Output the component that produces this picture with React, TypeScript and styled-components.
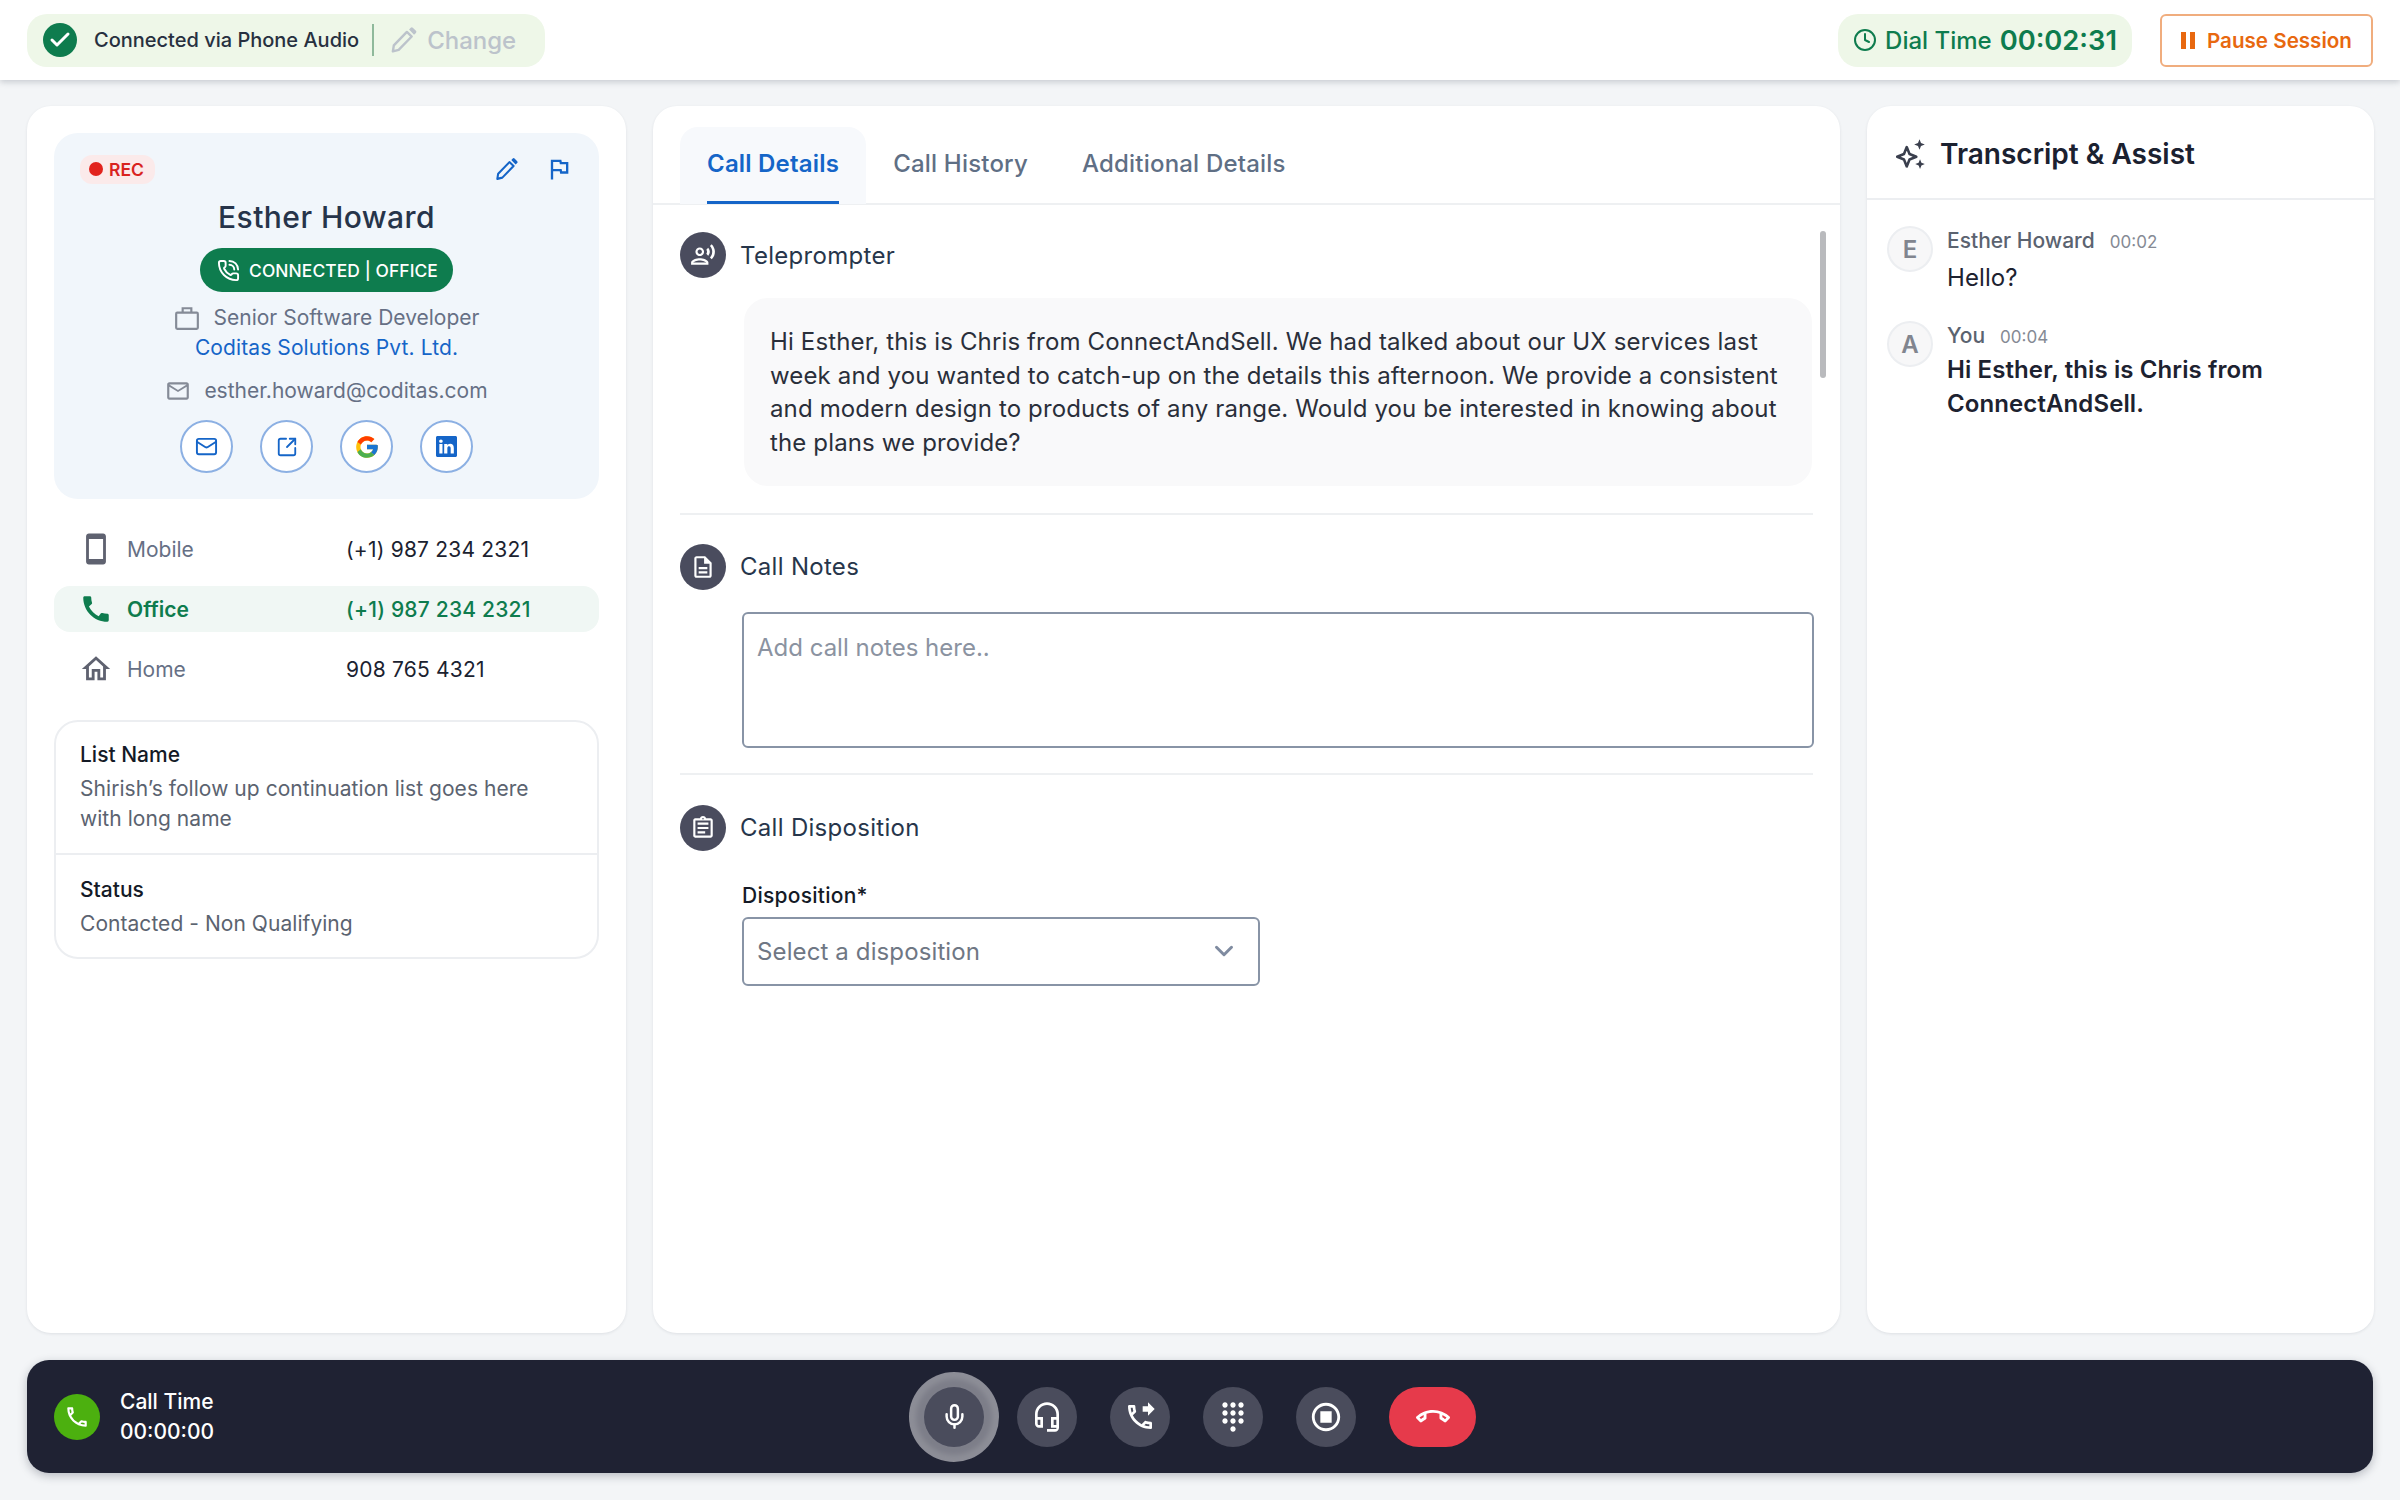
import * as React from "react";
import styled, { createGlobalStyle } from "styled-components";
import { Check, ChevronDown, Clock, Mail, Mic, PhoneCall, SquareArrowOutUpRight } from "lucide-react";
import { FcGoogle } from "react-icons/fc";
import { BsLinkedin } from "react-icons/bs";
import {
  MdCall,
  MdDialpad,
  MdOutlineAssignment,
  MdOutlineCall,
  MdOutlineCallEnd,
  MdOutlineDescription,
  MdOutlineFlag,
  MdOutlineHeadsetMic,
  MdOutlineHome,
  MdOutlineMail,
  MdOutlinePhoneForwarded,
  MdOutlineRecordVoiceOver,
  MdOutlineSmartphone,
  MdOutlineStopCircle,
} from "react-icons/md";

const GlobalStyle = createGlobalStyle`
  * { box-sizing: border-box; }
  html, body { margin: 0; padding: 0; }
  body {
    font-family: Inter, "Noto Sans", sans-serif;
    background: #f3f5f7;
    color: #2a3547;
  }
`;

const Page = styled.div`
  width: 2400px;
  height: 1500px;
  display: flex;
  flex-direction: column;
  background: #f3f5f7;
`;

const TopBar = styled.header`
  height: 80px;
  flex: none;
  display: flex;
  align-items: center;
  justify-content: space-between;
  padding: 0 27px;
  background: #fff;
  box-shadow: 0 2px 6px rgba(40, 50, 70, 0.22);
`;

const StatusPill = styled.div`
  height: 53px;
  display: flex;
  align-items: center;
  padding: 0 29px 0 16px;
  border-radius: 20px;
  background: #eef7e8;
`;

const CheckBadge = styled.span`
  width: 34px;
  height: 34px;
  border-radius: 50%;
  display: flex;
  align-items: center;
  justify-content: center;
  color: #fff;
  background: #0e7c4e;
`;

const StatusText = styled.span`
  margin-left: 17px;
  font-size: 20px;
  font-weight: 500;
  color: #27303f;
`;

const PillDivider = styled.span`
  width: 2px;
  height: 32px;
  margin: 0 15px 0 13px;
  background: #8fb99b;
`;

const ChangeLink = styled.span`
  display: flex;
  align-items: center;
  gap: 9px;
  font-size: 24px;
  font-weight: 500;
  color: #bcc3cb;
`;

const TopRight = styled.div`
  display: flex;
  align-items: center;
  gap: 28px;
`;

const DialPill = styled.div`
  height: 53px;
  display: flex;
  align-items: center;
  padding: 0 15px;
  border-radius: 20px;
  background: #eef7e8;
  color: #0e7c4e;
  font-size: 24px;
  font-weight: 500;
`;

const DialTime = styled.span`
  margin-left: 8px;
  font-size: 27.3px;
  font-weight: 600;
`;

const PauseButton = styled.button`
  width: 213px;
  height: 53px;
  display: flex;
  align-items: center;
  justify-content: center;
  gap: 12px;
  padding: 0;
  font: 600 20.6px Inter, sans-serif;
  color: #e8680f;
  background: #fff;
  border: 2px solid #f0ad7e;
  border-radius: 6px;
`;

const PauseBars = styled.span`
  width: 14px;
  height: 17px;
  border-left: 5px solid #e8680f;
  border-right: 5px solid #e8680f;
`;

const Columns = styled.main`
  flex: 1;
  min-height: 0;
  display: grid;
  grid-template-columns: 599px 1187px 507px;
  gap: 27px;
  padding: 26px 27px 27px;
`;

const Panel = styled.section`
  position: relative;
  min-height: 0;
  background: #fff;
  border-radius: 24px;
  box-shadow: 0 1px 3px rgba(40, 50, 70, 0.1);
  overflow: hidden;
`;

const ContactPanel = styled(Panel)`
  padding: 27px;
`;

const ContactCard = styled.div`
  padding: 21px 26px 26px;
  border-radius: 24px;
  background: #f1f6fb;
  display: flex;
  flex-direction: column;
  align-items: center;
`;

const CardTop = styled.div`
  width: 100%;
  height: 30px;
  display: flex;
  align-items: center;
  justify-content: space-between;
`;

const RecChip = styled.span`
  height: 29px;
  display: flex;
  align-items: center;
  gap: 6px;
  padding: 0 11px 0 9px;
  border-radius: 12px;
  background: #fbeaea;
  color: #d9231f;
  font-size: 17.5px;
  font-weight: 600;
`;

const RecDot = styled.span`
  width: 14px;
  height: 14px;
  border-radius: 50%;
  background: #e2231d;
`;

const CardActions = styled.div`
  display: flex;
  align-items: center;
  gap: 26px;
  color: #1565c8;
`;

const ContactName = styled.h2`
  margin: 13px 0 0;
  font-size: 30px;
  line-height: 40px;
  font-weight: 500;
  letter-spacing: 0.45px;
  color: #26344a;
`;

const ConnectedPill = styled.div`
  height: 44px;
  margin-top: 11px;
  display: flex;
  align-items: center;
  gap: 9px;
  padding: 0 15px 0 17px;
  border-radius: 22px;
  background: #0e7c4e;
  color: #fff;
  font-size: 17.4px;
  font-weight: 500;
  letter-spacing: 0.1px;
`;

const InfoLine = styled.div<{ $gap?: number; $top?: number }>`
  display: flex;
  align-items: center;
  gap: ${({ $gap }) => $gap ?? 14}px;
  margin-top: ${({ $top }) => $top ?? 0}px;
  font-size: 21px;
  line-height: 30px;
  color: #667085;
`;

const CompanyLink = styled.a`
  font-size: 21px;
  line-height: 30px;
  letter-spacing: 0.1px;
  color: #1565c8;
`;

const LinkRow = styled.div`
  display: flex;
  gap: 27px;
  margin-top: 14px;
`;

const RoundLink = styled.span`
  width: 53px;
  height: 53px;
  display: flex;
  align-items: center;
  justify-content: center;
  border: 2px solid #8cb0e3;
  border-radius: 50%;
  background: #fff;
  color: #1565c8;
`;

const PhoneList = styled.div`
  margin-top: 27px;
  display: flex;
  flex-direction: column;
  gap: 14px;
`;

const PhoneRow = styled.div<{ $active?: boolean }>`
  height: 46px;
  display: grid;
  grid-template-columns: 48px 219px 1fr;
  align-items: center;
  padding-left: 25px;
  border-radius: 16px;
  font-size: 21px;
  background: ${({ $active }) => ($active ? "#f0f7f4" : "transparent")};
  color: ${({ $active }) => ($active ? "#0e7c4e" : "#667085")};
  font-weight: ${({ $active }) => ($active ? 600 : 400)};
`;

const PhoneNumber = styled.span<{ $active?: boolean }>`
  letter-spacing: 0.2px;
  color: ${({ $active }) => ($active ? "#0e7c4e" : "#1b2230")};
  font-weight: ${({ $active }) => ($active ? 500 : 400)};
`;

const ListCard = styled.div`
  margin-top: 28px;
  border: 2px solid #eceef1;
  border-radius: 24px;
`;

const ListBlock = styled.div`
  padding: 18px 24px 19px;
  & + & {
    padding: 20px 24px 18px;
    border-top: 2px solid #eceef1;
  }
`;

const ListLabel = styled.div`
  font-size: 21px;
  line-height: 30px;
  font-weight: 500;
  color: #141a26;
`;

const ListValue = styled.div`
  margin-top: 4px;
  font-size: 21px;
  line-height: 30px;
  letter-spacing: 0.05px;
  color: #5b6370;
`;

const Tabs = styled.nav`
  height: 99px;
  display: flex;
  align-items: flex-end;
  padding-left: 27px;
  border-bottom: 2px solid #eef0f2;
`;

const Tab = styled.div<{ $active?: boolean }>`
  position: relative;
  height: 77px;
  margin-bottom: -1px;
  display: flex;
  align-items: center;
  padding: 0 27px 5px;
  border-radius: 18px 18px 0 0;
  font-size: 24px;
  letter-spacing: 0.2px;
  font-weight: ${({ $active }) => ($active ? 600 : 500)};
  color: ${({ $active }) => ($active ? "#1565c8" : "#5f6f85")};
  background: ${({ $active }) => ($active ? "#f7f9fc" : "transparent")};
  ${({ $active }) =>
    $active &&
    `&::after {
      content: "";
      position: absolute;
      left: 27px;
      right: 27px;
      bottom: 0;
      height: 3px;
      background: #1565c8;
    }`}
`;

const ScrollThumb = styled.div`
  position: absolute;
  top: 125px;
  right: 14px;
  width: 6px;
  height: 147px;
  border-radius: 3px;
  background: #b9babd;
`;

const DetailsBody = styled.div`
  padding: 0 27px;
`;

const Section = styled.div<{ $top: number; $bottom: number; $last?: boolean }>`
  padding: ${({ $top }) => $top}px 0 ${({ $bottom }) => $bottom}px;
  border-bottom: ${({ $last }) => ($last ? "none" : "2px solid #eef0f2")};
`;

const SectionHead = styled.div`
  display: flex;
  align-items: center;
  gap: 14px;
  font-size: 24px;
  font-weight: 400;
  letter-spacing: 0.3px;
  color: #27364b;
`;

const SectionIcon = styled.span`
  width: 46px;
  height: 46px;
  display: flex;
  align-items: center;
  justify-content: center;
  border-radius: 50%;
  background: #4a4c5e;
  color: #fff;
`;

const Bubble = styled.p`
  margin: 20px 1px 0 64px;
  padding: 27px 26px 26px;
  border-radius: 24px;
  background: #f9f9fa;
  font-size: 24px;
  line-height: 33.7px;
  letter-spacing: 0.14px;
  color: #2a2f3a;
`;

const NotesBox = styled.textarea`
  display: block;
  width: 1072px;
  height: 136px;
  margin: 22px 0 0 62px;
  padding: 19px 13px;
  font: 400 24px Inter, sans-serif;
  resize: none;
  border: 2px solid #8894a6;
  border-radius: 6px;
  background: #fff;
  &::placeholder { color: #8b93a1; }
`;

const FieldLabel = styled.label`
  display: block;
  margin: 30px 0 6px 62px;
  font-size: 21px;
  line-height: 30px;
  font-weight: 500;
  letter-spacing: 0.25px;
  color: #141a26;
`;

const SelectBox = styled.div`
  width: 518px;
  height: 69px;
  margin-left: 62px;
  display: flex;
  align-items: center;
  justify-content: space-between;
  padding: 0 19px 0 13px;
  border: 2px solid #8894a6;
  border-radius: 6px;
  font-size: 24px;
  letter-spacing: 0.12px;
  color: #6f7784;
`;

const TranscriptHead = styled.div`
  height: 94px;
  display: flex;
  align-items: center;
  gap: 12px;
  padding: 3px 0 0 27px;
  border-bottom: 2px solid #eceef1;
  font-size: 28px;
  font-weight: 600;
  color: #1b2130;
`;

const Messages = styled.div`
  padding: 26px 20px;
  display: flex;
  flex-direction: column;
  gap: 26px;
`;

const Message = styled.div`
  display: flex;
  gap: 14px;
`;

const Avatar = styled.span`
  width: 46px;
  height: 46px;
  flex: none;
  display: flex;
  align-items: center;
  justify-content: center;
  border: 2px solid #eceef1;
  border-radius: 50%;
  background: #f7f7f8;
  color: #81858f;
  font-size: 24px;
  font-weight: 600;
`;

const MessageMeta = styled.div`
  display: flex;
  align-items: baseline;
  gap: 15px;
  font-size: 21px;
  line-height: 30px;
  font-weight: 500;
  color: #5b6370;
`;

const MessageTime = styled.span`
  font-size: 17px;
  font-weight: 400;
  color: #858a94;
`;

const MessageText = styled.div<{ $strong?: boolean }>`
  margin-top: ${({ $strong }) => ($strong ? 1 : 4)}px;
  font-size: 24px;
  line-height: 34px;
  letter-spacing: 0.1px;
  font-weight: ${({ $strong }) => ($strong ? 600 : 400)};
  color: #1d2230;
`;

const CallBar = styled.footer`
  flex: none;
  height: 113px;
  margin: 0 27px 27px;
  display: grid;
  grid-template-columns: 1fr auto 1fr;
  align-items: center;
  padding: 0 27px;
  border-radius: 22px;
  background: #1f2233;
  box-shadow: 0 3px 10px rgba(30, 35, 55, 0.28);
`;

const CallInfo = styled.div`
  display: flex;
  align-items: center;
  gap: 20px;
  color: #fff;
`;

const GreenBadge = styled.span`
  width: 46px;
  height: 46px;
  display: flex;
  align-items: center;
  justify-content: center;
  border-radius: 50%;
  background: #4cb00f;
  color: #fff;
`;

const CallTimer = styled.div`
  font-size: 21px;
  line-height: 30px;
  font-weight: 500;
`;

const Controls = styled.div`
  display: flex;
  gap: 33px;
`;

const ControlButton = styled.button<{ $ring?: boolean; $danger?: boolean }>`
  width: ${({ $danger }) => ($danger ? 87 : 60)}px;
  height: 60px;
  display: flex;
  align-items: center;
  justify-content: center;
  padding: 0;
  border: none;
  border-radius: 30px;
  color: #fff;
  background: ${({ $danger }) => ($danger ? "#e63a4b" : "#4a4c5c")};
  box-shadow: ${({ $ring }) => ($ring ? "0 0 5px 8px #7d7e89, 0 0 0 15px #8d8e97" : "none")};
`;

const Sparkles = () => (
  <svg width="34" height="34" viewBox="0 0 32 32" fill="none">
    <path d="M12 9.5 14.6 16 21 18.6 14.6 21.2 12 27.7 9.4 21.2 3 18.6 9.4 16Z" stroke="#3a3f4d" strokeWidth="2.4" strokeLinejoin="round" />
    <path d="M24 2 25.4 5.6 29 7 25.4 8.4 24 12 22.6 8.4 19 7 22.6 5.6Z" fill="#3a3f4d" />
    <path d="M24.5 21 25.8 24.2 29 25.5 25.8 26.8 24.5 30 23.2 26.8 20 25.5 23.2 24.2Z" fill="#3a3f4d" />
  </svg>
);

const SlimPencil = ({ size }: { size: number }) => (
  <svg width={size} height={size} viewBox="0 0 24 24" fill="none">
    <path d="M3.2 21 4 16 14.8 4.9 18.8 8.7 8 19.8Z" stroke="currentColor" strokeWidth="2" strokeLinejoin="round" />
    <path d="M16.6 2.9 18 1.5a1.2 1.2 0 0 1 1.7 0l2.6 2.5a1.2 1.2 0 0 1 0 1.7L20.7 7.2Z" fill="currentColor" />
  </svg>
);

const Briefcase = () => (
  <svg width="26" height="26" viewBox="0 0 24 24" fill="none" stroke="#858b97" strokeWidth="2">
    <rect x="2" y="7" width="20" height="15" rx="1" />
    <path d="M8 7V3h8v4" />
  </svg>
);

const App = () => (
  <Page>
    <GlobalStyle />
    <TopBar>
      <StatusPill>
        <CheckBadge>
          <Check size={24} strokeWidth={3} />
        </CheckBadge>
        <StatusText>Connected via Phone Audio</StatusText>
        <PillDivider />
        <ChangeLink>
          <SlimPencil size={29} />
          Change
        </ChangeLink>
      </StatusPill>
      <TopRight>
        <DialPill>
          <Clock size={24} strokeWidth={2} style={{ marginRight: 8 }} />
          Dial Time
          <DialTime>00:02:31</DialTime>
        </DialPill>
        <PauseButton>
          <PauseBars />
          Pause Session
        </PauseButton>
      </TopRight>
    </TopBar>

    <Columns>
      <ContactPanel>
        <ContactCard>
          <CardTop>
            <RecChip>
              <RecDot />
              REC
            </RecChip>
            <CardActions>
              <SlimPencil size={25} />
              <MdOutlineFlag size={28} />
            </CardActions>
          </CardTop>
          <ContactName>Esther Howard</ContactName>
          <ConnectedPill>
            <PhoneCall size={23} />
            CONNECTED | OFFICE
          </ConnectedPill>
          <InfoLine $top={11}>
            <Briefcase />
            Senior Software Developer
          </InfoLine>
          <CompanyLink>Coditas Solutions Pvt. Ltd.</CompanyLink>
          <InfoLine $top={13} $gap={13}>
            <MdOutlineMail size={26} color="#858b97" />
            esther.howard@coditas.com
          </InfoLine>
          <LinkRow>
            <RoundLink>
              <Mail size={23} strokeWidth={2} />
            </RoundLink>
            <RoundLink>
              <SquareArrowOutUpRight size={22} strokeWidth={2} />
            </RoundLink>
            <RoundLink>
              <FcGoogle size={26} />
            </RoundLink>
            <RoundLink>
              <BsLinkedin size={21} />
            </RoundLink>
          </LinkRow>
        </ContactCard>

        <PhoneList>
          <PhoneRow>
            <MdOutlineSmartphone size={34} color="#5f6270" />
            <span>Mobile</span>
            <PhoneNumber>(+1) 987 234 2321</PhoneNumber>
          </PhoneRow>
          <PhoneRow $active>
            <MdCall size={34} />
            <span>Office</span>
            <PhoneNumber $active>(+1) 987 234 2321</PhoneNumber>
          </PhoneRow>
          <PhoneRow>
            <MdOutlineHome size={34} color="#5f6270" />
            <span>Home</span>
            <PhoneNumber>908 765 4321</PhoneNumber>
          </PhoneRow>
        </PhoneList>

        <ListCard>
          <ListBlock>
            <ListLabel>List Name</ListLabel>
            <ListValue>
              Shirish’s follow up continuation list goes here
              <br />
              with long name
            </ListValue>
          </ListBlock>
          <ListBlock>
            <ListLabel>Status</ListLabel>
            <ListValue>Contacted - Non Qualifying</ListValue>
          </ListBlock>
        </ListCard>
      </ContactPanel>

      <Panel>
        <Tabs>
          <Tab $active>Call Details</Tab>
          <Tab>Call History</Tab>
          <Tab>Additional Details</Tab>
        </Tabs>
        <ScrollThumb />
        <DetailsBody>
          <Section $top={27} $bottom={27}>
            <SectionHead>
              <SectionIcon>
                <MdOutlineRecordVoiceOver size={26} />
              </SectionIcon>
              Teleprompter
            </SectionHead>
            <Bubble>
              Hi Esther, this is Chris from ConnectAndSell. We had talked about our UX services last
              week and you wanted to catch-up on the details this afternoon. We provide a consistent
              and modern design to products of any range. Would you be interested in knowing about
              the plans we provide?
            </Bubble>
          </Section>
          <Section $top={29} $bottom={25}>
            <SectionHead>
              <SectionIcon>
                <MdOutlineDescription size={26} />
              </SectionIcon>
              Call Notes
            </SectionHead>
            <NotesBox placeholder="Add call notes here.." />
          </Section>
          <Section $top={30} $bottom={0} $last>
            <SectionHead>
              <SectionIcon>
                <MdOutlineAssignment size={26} />
              </SectionIcon>
              Call Disposition
            </SectionHead>
            <FieldLabel>Disposition*</FieldLabel>
            <SelectBox>
              Select a disposition
              <ChevronDown size={30} strokeWidth={2.4} color="#7f8ba0" />
            </SelectBox>
          </Section>
        </DetailsBody>
      </Panel>

      <Panel>
        <TranscriptHead>
          <Sparkles />
          Transcript &amp; Assist
        </TranscriptHead>
        <Messages>
          <Message>
            <Avatar>E</Avatar>
            <div>
              <MessageMeta>
                Esther Howard
                <MessageTime>00:02</MessageTime>
              </MessageMeta>
              <MessageText>Hello?</MessageText>
            </div>
          </Message>
          <Message>
            <Avatar>A</Avatar>
            <div>
              <MessageMeta>
                You
                <MessageTime>00:04</MessageTime>
              </MessageMeta>
              <MessageText $strong>
                Hi Esther, this is Chris from
                <br />
                ConnectAndSell.
              </MessageText>
            </div>
          </Message>
        </Messages>
      </Panel>
    </Columns>

    <CallBar>
      <CallInfo>
        <GreenBadge>
          <MdOutlineCall size={26} />
        </GreenBadge>
        <CallTimer>
          Call Time
          <br />
          00:00:00
        </CallTimer>
      </CallInfo>
      <Controls>
        <ControlButton $ring>
          <Mic size={27} strokeWidth={2.2} />
        </ControlButton>
        <ControlButton>
          <MdOutlineHeadsetMic size={32} />
        </ControlButton>
        <ControlButton>
          <MdOutlinePhoneForwarded size={32} />
        </ControlButton>
        <ControlButton>
          <MdDialpad size={32} />
        </ControlButton>
        <ControlButton>
          <MdOutlineStopCircle size={34} />
        </ControlButton>
        <ControlButton $danger>
          <MdOutlineCallEnd size={34} />
        </ControlButton>
      </Controls>
      <span />
    </CallBar>
  </Page>
);

export default App;
